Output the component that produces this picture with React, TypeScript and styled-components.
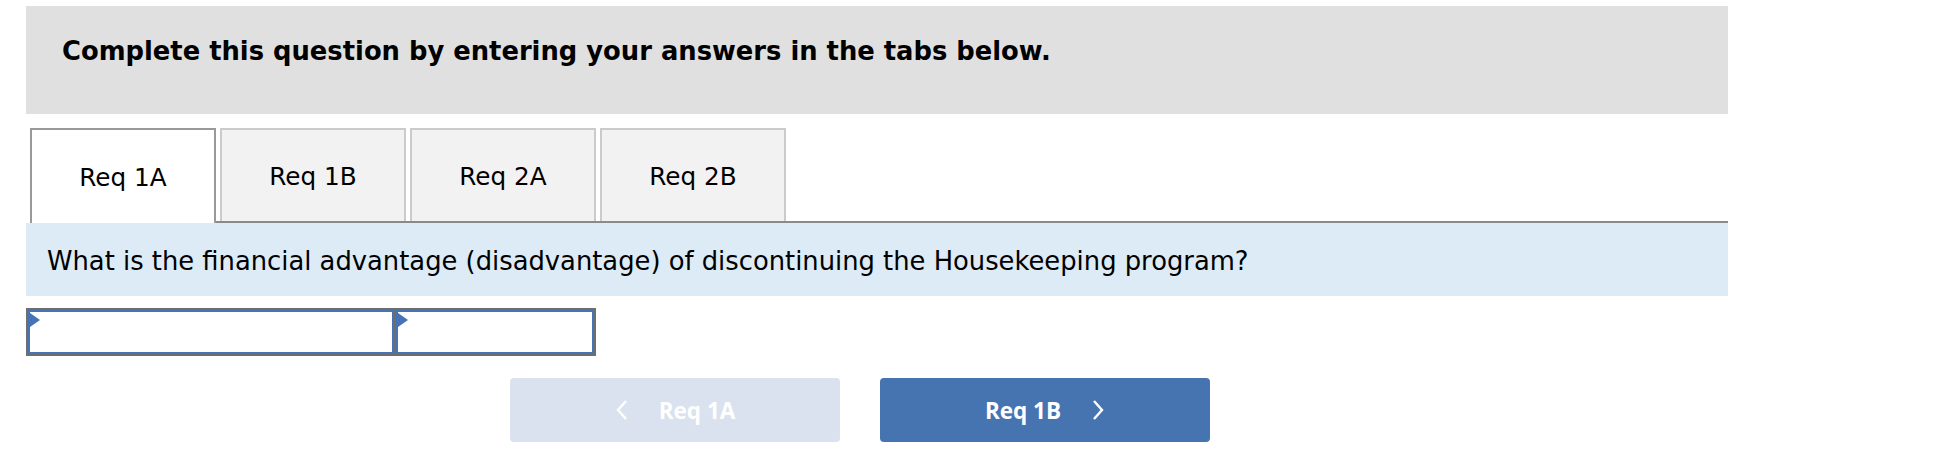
import styled, { createGlobalStyle } from "styled-components";

const GlobalStyle = createGlobalStyle`
  body {
    margin: 0;
    background: #fff;
    font-family: "DejaVu Sans", Verdana, sans-serif;
    color: #000;
  }
`;

const tabs = ["Req 1A", "Req 1B", "Req 2A", "Req 2B"];

export default function App() {
  const active = 0;

  return (
    <Page>
      <GlobalStyle />
      <Header>Complete this question by entering your answers in the tabs below.</Header>

      <TabStrip>
        <Tab $active>{tabs[active]}</Tab>
        <TabRest>
          {tabs.slice(1).map((t) => (
            <Tab key={t}>{t}</Tab>
          ))}
        </TabRest>
      </TabStrip>

      <Question>
        What is the financial advantage (disadvantage) of discontinuing the Housekeeping program?
      </Question>

      <AnswerTable>
        <Cell $w={366} />
        <Cell $w={198} />
      </AnswerTable>

      <NavRow>
        <NavButton $disabled>
          <Chevron dir="left" />
          <span>Req 1A</span>
        </NavButton>
        <NavButton>
          <span>Req 1B</span>
          <Chevron dir="right" />
        </NavButton>
      </NavRow>
    </Page>
  );
}

function Chevron({ dir }: { dir: "left" | "right" }) {
  return (
    <svg width="13" height="22" viewBox="0 0 13 22" aria-hidden="true">
      <path
        d={dir === "left" ? "M11 2 L3 11 L11 20" : "M2 2 L10 11 L2 20"}
        fill="none"
        stroke="#fff"
        strokeWidth="2.4"
        strokeLinejoin="miter"
      />
    </svg>
  );
}

const Page = styled.div`
  width: 1702px;
  padding: 6px 0 0 26px;
`;

const Header = styled.div`
  height: 108px;
  box-sizing: border-box;
  background: #e0e0e0;
  padding: 30px 36px 0;
  font-size: 25.8px;
  font-weight: 700;
  line-height: 1.2;
`;

const TabStrip = styled.div`
  display: flex;
  margin-top: 14px;
  padding-left: 4px;
`;

const TabRest = styled.div`
  flex: 1;
  display: flex;
  gap: 4px;
  padding-left: 4px;
  border-bottom: 2px solid #8a8a8a;
`;

const Tab = styled.div<{ $active?: boolean }>`
  width: 186px;
  height: ${({ $active }) => ($active ? "95px" : "93px")};
  box-sizing: border-box;
  display: flex;
  align-items: center;
  justify-content: center;
  font-size: 24.7px;
  background: ${({ $active }) => ($active ? "#fff" : "#f2f2f2")};
  border: 2px solid ${({ $active }) => ($active ? "#999" : "#cbcbcb")};
  border-bottom: none;
  padding-top: 2px;
`;

const Question = styled.div`
  height: 73px;
  box-sizing: border-box;
  display: flex;
  align-items: center;
  padding: 3px 0 0 21px;
  background: #ddebf7;
  font-size: 25.8px;
`;

const AnswerTable = styled.div`
  display: inline-flex;
  margin-top: 12px;
  padding: 2px;
  gap: 2px;
  background: #6e6e6e;
`;

const Cell = styled.div<{ $w: number }>`
  position: relative;
  width: ${({ $w }) => $w}px;
  height: 44px;
  box-sizing: border-box;
  background: #fff;
  border: 2px solid #4673b6;

  &::before {
    content: "";
    position: absolute;
    left: 0;
    top: 1px;
    border-left: 10px solid #4673b6;
    border-top: 7px solid transparent;
    border-bottom: 7px solid transparent;
  }
`;

const NavRow = styled.div`
  display: flex;
  gap: 40px;
  margin-top: 20px;
  padding-left: 484px;
`;

const NavButton = styled.div<{ $disabled?: boolean }>`
  width: 330px;
  height: 64px;
  border-radius: 4px;
  display: flex;
  align-items: center;
  justify-content: center;
  gap: 31px;
  background: ${({ $disabled }) => ($disabled ? "#d9e2ee" : "#4674b1")};
  color: #fff;
  font-family: "Open Sans", sans-serif;
  font-size: 22.5px;
  font-weight: 700;
`;
